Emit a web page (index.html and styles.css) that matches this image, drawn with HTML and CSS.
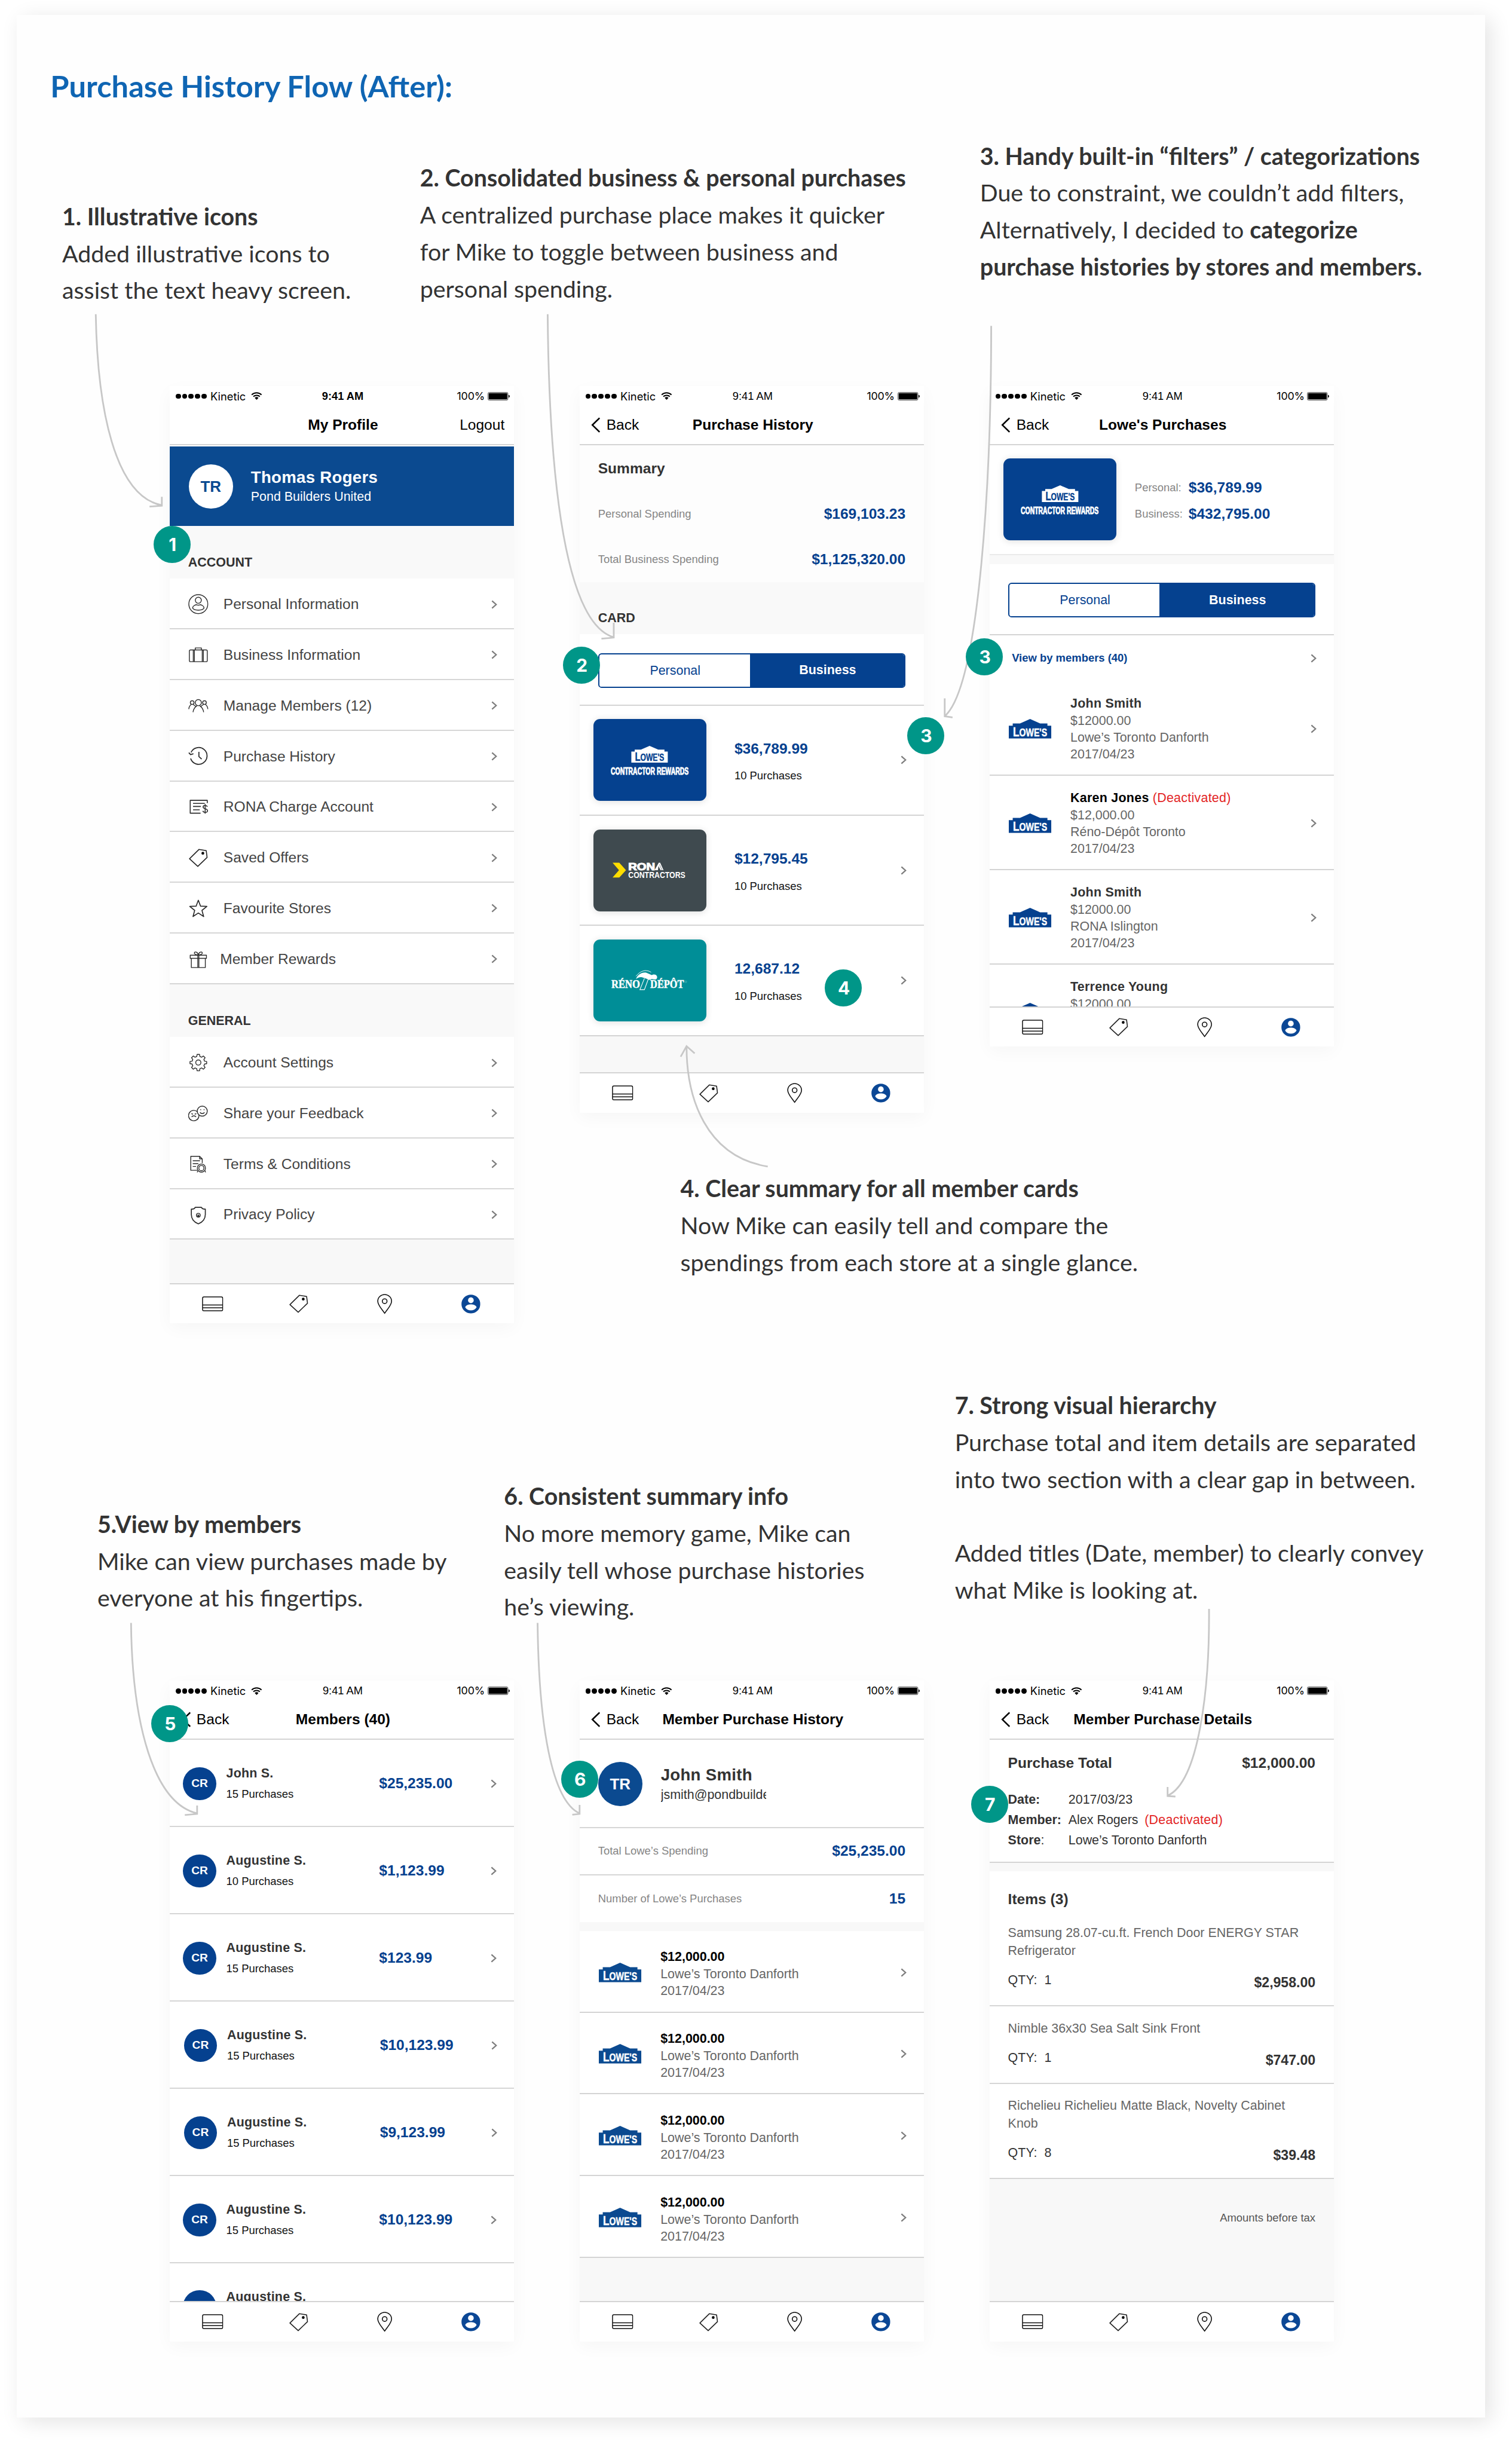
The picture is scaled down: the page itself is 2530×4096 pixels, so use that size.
FILE: index.html
```html
<!DOCTYPE html>
<html lang="en">
<head>
<meta charset="utf-8">
<title>Purchase History Flow (After)</title>
<link rel="stylesheet" href="styles.css">
</head>
<body>
<svg class="defs" width="0" height="0" aria-hidden="true">
  <symbol id="i-wifi" viewBox="0 0 20 14"><path d="M1.2 4.9a12.6 12.6 0 0 1 17.6 0M4.2 8.1a8.4 8.4 0 0 1 11.6 0" fill="none" stroke="#000" stroke-width="2.1"/><path d="M6.6 10.4a5 5 0 0 1 6.8 0L10 13.8z"/></symbol>
  <symbol id="i-battery" viewBox="0 0 40 15"><rect x=".6" y=".6" width="35.6" height="13.8" rx="2" fill="none" stroke="#444" stroke-width="1"/><rect x="1.8" y="1.8" width="33.2" height="11.4" rx="1"/><path d="M37.4 5c2.6.4 2.6 4.6 0 5z"/></symbol>
  <symbol id="i-back" viewBox="0 0 17 28"><path d="M15.2 1.4 2.4 14l12.8 12.6" fill="none" stroke="#000" stroke-width="2.8"/></symbol>
  <symbol id="i-next" viewBox="0 0 11 16"><path d="M1.4 1.4 8.8 8l-7.4 6.6" fill="none" stroke="#7d7d7d" stroke-width="2.4"/></symbol>
  <symbol id="i-card" viewBox="0 0 38 27"><g fill="none" stroke="#111" stroke-width="1.6"><rect x="1" y="1" width="36" height="25" rx="2.4"/><path d="M1 15.4h36M1 20.6h36"/></g></symbol>
  <symbol id="i-tag" viewBox="0 0 34 33"><path d="M1.2 18 18 1.4 31 3.4 32.6 15.6 16 31.6z" fill="none" stroke="#222" stroke-width="1.7" stroke-linejoin="round"/><circle cx="25" cy="8.2" r="2.5"/></symbol>
  <symbol id="i-pin" viewBox="0 0 27 36"><g fill="none" stroke="#111" stroke-width="1.7"><path d="M13.5 34.6C8 26.4 1.2 20 1.2 13a12.3 12 0 0 1 24.6 0c0 7-6.8 13.4-12.3 21.6z"/><circle cx="13.5" cy="13" r="4.2"/></g></symbol>
  <symbol id="i-user" viewBox="0 0 34 34"><circle cx="17" cy="17" r="16.8" fill="#0b4795"/><circle cx="17" cy="10.3" r="5.1" fill="#fff"/><path d="M6.8 22.600c1.4-3.600 6-5 10.200-5s8.800 1.400 10.200 5c-1.800 3.600-5.800 5.600-10.200 5.600s-8.400-2-10.200-5.600z" fill="#fff"/></symbol>
  <symbol id="i-lowes" viewBox="0 0 76 35"><path d="M38 0 56 7.900h13v4h7V35H0V11.900h7v-4h13z" fill="currentColor"/><text class="lowes-word" x="7.5" y="31" textLength="61" lengthAdjust="spacingAndGlyphs"><tspan font-size="24.5">L</tspan><tspan font-size="20">OWE'S</tspan></text></symbol>
  <symbol id="m-person" viewBox="0 0 36 36"><circle cx="18" cy="18" r="17"/><circle cx="18" cy="11" r="5.400"/><path d="M7.800 25c0-4 5-5.800 7-6 2 1 4.400 1 6.400 0 2 .2 7 2 7 6-3.200 5-17.200 5-20.400 0z"/></symbol>
  <symbol id="m-case" viewBox="0 0 36 36"><rect x="2" y="9" width="32" height="21" rx="2"/><path d="M9 9v21M11 9v21M25 9v21M27 9v21M12.500 9V5.500h11V9"/></symbol>
  <symbol id="m-group" viewBox="0 0 36 36"><circle cx="18" cy="12.500" r="5.500"/><circle cx="7" cy="12.300" r="3.300"/><circle cx="29" cy="12.300" r="3.300"/><path d="M8.500 29.500c.5-5 3.500-9 7-11.500M27.500 29.500c-.5-5-3.500-9-7-11.500M1 24c.2-4 1.800-6.500 4.500-8.500M35 24c-.2-4-1.800-6.500-4.500-8.500M8.500 15.500l4.800 3.500M27.500 15.500l-4.800 3.500"/></symbol>
  <symbol id="m-clock" viewBox="0 0 36 36"><path d="M4.300 21.500A15 15 0 1 0 5 10.500M1 11l3.200 3.600 5-1.600M19 9.500v8.500l5 4.500" stroke-width="1.900"/></symbol>
  <symbol id="m-charge" viewBox="0 0 36 36"><path d="M22 29.500H3.500V6.500H34v5M8.500 12h21M8.500 17.500h14M8.500 23.500h12" stroke-width="1.700"/><path d="M34 18c-.8-3-7.500-3-7.500.4 0 4 8 2.600 8 6.600 0 3.900-7.600 3.900-8.500.3M30.200 13v17.500" stroke-width="1.600"/></symbol>
  <symbol id="m-star" viewBox="0 0 36 36"><path d="m18 3.500 4 10.600 11.300.5-8.800 7 3 11L18 26.300l-9.500 6.300 3-11-8.800-7 11.300-.5z" stroke-width="1.800"/></symbol>
  <symbol id="m-gift" viewBox="0 0 36 36"><path d="M3.500 11h29v5.500h-29zM5.500 16.500h25V33h-25zM17 11v22M19 11v22M18 11c-3-1-8-1.500-7-4.500 1-2.500 6-1.500 7 4.500 1-6 6-7 7-4.500 1 3-4 3.500-7 4.500z"/></symbol>
  <symbol id="m-gear" viewBox="0 0 36 36"><circle cx="18" cy="18" r="4.600"/><path d="M15.200 7.200 15.800 3.500h4.400l.6 3.700 3.100 1.300 3.100-2.200 3.100 3.100-2.200 3.100 1.300 3.100 3.700.6v3.800l-3.700.6-1.300 3.100 2.200 3.100-3.100 3.100-3.100-2.200-3.100 1.300-.6 3.700h-4.400l-.6-3.700-3.100-1.300-3.100 2.200-3.100-3.100 2.200-3.100-1.300-3.100-3.700-.6v-3.800l3.700-.6 1.300-3.100-2.200-3.100 3.100-3.100 3.100 2.200z"/></symbol>
  <symbol id="m-faces" viewBox="0 0 36 36"><circle cx="25" cy="14" r="9"/><path d="M16.500 15.500A9.300 9.300 0 1 0 19 23.500c.1-.900 0-1.500-.3-2.500M21 16.300c2 2.800 6 2.800 8 0M21.500 11.500h1.500M27.500 11.500H29M6 24.500c2-2.800 6-2.800 8 0M5.500 18.500l3 1M14.500 18.500l-3 1"/></symbol>
  <symbol id="m-terms" viewBox="0 0 36 36"><path d="M16 29H4.500V4h15.800L25 8.500V16M20.300 4v4.500H25M8 12h13M8 17h10M8 22h6"/><circle cx="23.500" cy="25" r="7.300"/><circle cx="23.500" cy="25" r="4.600"/><path d="m17.500 29-1.500 3.500M29.500 29l1.500 3.500"/></symbol>
  <symbol id="m-shield" viewBox="0 0 36 36"><path d="M18 34C9.500 30.500 5.500 24 5.500 17V7.500c3 .4 5.500-.6 7-3h11c1.500 2.400 4 3.400 7 3V17c0 7-4 13.500-12.500 17z" stroke-width="1.800"/><circle cx="18" cy="18.500" r="3.400"/><path d="M17.200 18h1.600v2.600h-1.600z"/></symbol>
</svg>

<main class="sheet">
  <h1 class="title">Purchase History Flow (After):</h1>

  <div class="notes notes-top">
    <article class="note note-1"><h2>1. Illustrative icons</h2><p>Added illustrative icons to<br>assist the text heavy screen.</p></article>
    <article class="note note-2"><h2>2. Consolidated business &amp; personal purchases</h2><p>A centralized purchase place makes it quicker<br>for Mike to toggle between business and<br>personal spending.</p></article>
    <article class="note note-3"><h2>3. Handy built-in “filters” / categorizations</h2><p>Due to constraint, we couldn’t add filters,<br>Alternatively, I decided to <b>categorize<br>purchase histories by stores and members.</b></p></article>
  </div>

  <div class="phones phones-top">
    <section class="phone phone-profile">
      <header class="bar">
        <div class="status strong"><span class="carrier"><i class="dots"><i></i><i></i><i></i><i></i><i></i></i>Kinetic<svg class="wifi"><use href="#i-wifi"/></svg></span><span class="time">9:41 AM</span><span class="power">100%<svg class="battery"><use href="#i-battery"/></svg></span></div>
        <div class="nav"><span></span><h3>My Profile</h3><span class="logout">Logout</span></div>
      </header>
      <div class="profile"><span class="avatar">TR</span><div><strong>Thomas Rogers</strong><span>Pond Builders United</span></div></div>
      <h4 class="group">ACCOUNT</h4>
      <ul class="menu">
        <li><svg class="line-i"><use href="#m-person"/></svg><span>Personal Information</span><svg class="next"><use href="#i-next"/></svg></li>
        <li><svg class="line-i"><use href="#m-case"/></svg><span>Business Information</span><svg class="next"><use href="#i-next"/></svg></li>
        <li><svg class="line-i"><use href="#m-group"/></svg><span>Manage Members (12)</span><svg class="next"><use href="#i-next"/></svg></li>
        <li><svg class="line-i"><use href="#m-clock"/></svg><span>Purchase History</span><svg class="next"><use href="#i-next"/></svg></li>
        <li><svg class="line-i"><use href="#m-charge"/></svg><span>RONA Charge Account</span><svg class="next"><use href="#i-next"/></svg></li>
        <li><svg class="tag"><use href="#i-tag"/></svg><span>Saved Offers</span><svg class="next"><use href="#i-next"/></svg></li>
        <li><svg class="line-i"><use href="#m-star"/></svg><span>Favourite Stores</span><svg class="next"><use href="#i-next"/></svg></li>
        <li class="tight"><svg class="line-i"><use href="#m-gift"/></svg><span>Member Rewards</span><svg class="next"><use href="#i-next"/></svg></li>
      </ul>
      <h4 class="group">GENERAL</h4>
      <ul class="menu">
        <li><svg class="line-i"><use href="#m-gear"/></svg><span>Account Settings</span><svg class="next"><use href="#i-next"/></svg></li>
        <li><svg class="line-i"><use href="#m-faces"/></svg><span>Share your Feedback</span><svg class="next"><use href="#i-next"/></svg></li>
        <li><svg class="line-i"><use href="#m-terms"/></svg><span>Terms &amp; Conditions</span><svg class="next"><use href="#i-next"/></svg></li>
        <li><svg class="line-i"><use href="#m-shield"/></svg><span>Privacy Policy</span><svg class="next"><use href="#i-next"/></svg></li>
      </ul>
      <div class="filler"></div>
      <footer class="tabs"><span><svg class="card-i"><use href="#i-card"/></svg></span><span><svg class="tag"><use href="#i-tag"/></svg></span><span><svg class="pin-i"><use href="#i-pin"/></svg></span><span><svg class="user-i"><use href="#i-user"/></svg></span></footer>
    </section>

    <section class="phone phone-history">
      <header class="bar">
        <div class="status"><span class="carrier"><i class="dots"><i></i><i></i><i></i><i></i><i></i></i>Kinetic<svg class="wifi"><use href="#i-wifi"/></svg></span><span class="time">9:41 AM</span><span class="power">100%<svg class="battery"><use href="#i-battery"/></svg></span></div>
        <div class="nav"><span class="back"><svg><use href="#i-back"/></svg>Back</span><h3>Purchase History</h3><span></span></div>
      </header>
      <div class="summary">
        <h4>Summary</h4>
        <div class="pair"><span>Personal Spending</span><b>$169,103.23</b></div>
        <div class="pair"><span>Total Business Spending</span><b>$1,125,320.00</b></div>
      </div>
      <h4 class="group group-card">CARD</h4>
      <div class="switch"><div class="segments"><span>Personal</span><b>Business</b></div></div>
      <div class="card-row"><div class="card lowes"><svg class="house"><use href="#i-lowes"/></svg><svg class="slogan" viewBox="0 0 140 14"><text x="0" y="12.800" textLength="139" lengthAdjust="spacingAndGlyphs">CONTRACTOR REWARDS</text></svg></div><div class="sum"><b>$36,789.99</b><span>10 Purchases</span></div><svg class="next"><use href="#i-next"/></svg></div>
      <div class="card-row"><div class="card rona"><svg viewBox="0 0 132 30"><path d="M0 1.500h12L24 15 12 28H0l11.500-13z" fill="#fd0"/><text class="rona-name" x="28" y="15" textLength="48" lengthAdjust="spacingAndGlyphs">RON</text><path d="M75 15 82.500 1.500H85L91 15h-2.200L84 4.500h-.600L88 15h-2.200L82 7.500 81 15z" fill="#fff"/><text class="rona-sub" x="28" y="28.500" textLength="102" lengthAdjust="spacingAndGlyphs">CONTRACTORS</text></svg></div><div class="sum"><b>$12,795.45</b><span>10 Purchases</span></div><svg class="next"><use href="#i-next"/></svg></div>
      <div class="card-row"><div class="card reno"><svg viewBox="0 0 136 36"><text x="0" y="31" textLength="51" lengthAdjust="spacingAndGlyphs">RÉNO</text><text x="69.500" y="31" textLength="60" lengthAdjust="spacingAndGlyphs">DÉPÔT</text><path d="M44 15c3-8 11-13 19-11l9 4c2-1 5-2 8 0 3 3 2 8-2 8l-6-1c-2 2-6 2-8 0l-9-3c-4-1-7 0-11 3z" fill="#fff"/><path d="M44 10c4-5 9-9 16-10 5 0 8 1 11 3" fill="none" stroke="#fff"/><path d="M59 14 51 34h8l7-19" fill="none" stroke="#fff" stroke-width="1.200"/><circle cx="133" cy="20" r="1.600" fill="none" stroke="#7cc" stroke-width=".6"/></svg></div><div class="sum"><b>12,687.12</b><span>10 Purchases</span></div><svg class="next"><use href="#i-next"/></svg></div>
      <div class="filler"></div>
      <footer class="tabs"><span><svg class="card-i"><use href="#i-card"/></svg></span><span><svg class="tag"><use href="#i-tag"/></svg></span><span><svg class="pin-i"><use href="#i-pin"/></svg></span><span><svg class="user-i"><use href="#i-user"/></svg></span></footer>
    </section>

    <section class="phone phone-store">
      <header class="bar">
        <div class="status"><span class="carrier"><i class="dots"><i></i><i></i><i></i><i></i><i></i></i>Kinetic<svg class="wifi"><use href="#i-wifi"/></svg></span><span class="time">9:41 AM</span><span class="power">100%<svg class="battery"><use href="#i-battery"/></svg></span></div>
        <div class="nav"><span class="back"><svg><use href="#i-back"/></svg>Back</span><h3>Lowe's Purchases</h3><span></span></div>
      </header>
      <div class="store"><div class="card lowes"><svg class="house"><use href="#i-lowes"/></svg><svg class="slogan" viewBox="0 0 140 14"><text x="0" y="12.800" textLength="139" lengthAdjust="spacingAndGlyphs">CONTRACTOR REWARDS</text></svg></div><dl><dt>Personal:</dt><dd>$36,789.99</dd><dt>Business:</dt><dd>$432,795.00</dd></dl></div>
      <div class="gap"></div>
      <div class="switch"><div class="segments"><span>Personal</span><b>Business</b></div></div>
      <div class="scroll">
        <div class="view"><b>View by members (40)</b><svg class="next"><use href="#i-next"/></svg></div>
        <div class="buy"><svg class="lowes-i"><use href="#i-lowes"/></svg><div><b>John Smith</b><span>$12000.00</span><span>Lowe’s Toronto Danforth</span><span>2017/04/23</span></div><svg class="next"><use href="#i-next"/></svg></div>
        <div class="buy"><svg class="lowes-i"><use href="#i-lowes"/></svg><div><b class="ink">Karen Jones <em>(Deactivated)</em></b><span>$12,000.00</span><span>Réno-Dépôt Toronto</span><span>2017/04/23</span></div><svg class="next"><use href="#i-next"/></svg></div>
        <div class="buy"><svg class="lowes-i"><use href="#i-lowes"/></svg><div><b>John Smith</b><span>$12000.00</span><span>RONA Islington</span><span>2017/04/23</span></div><svg class="next"><use href="#i-next"/></svg></div>
        <div class="buy"><svg class="lowes-i"><use href="#i-lowes"/></svg><div><b>Terrence Young</b><span>$12000.00</span><span>&nbsp;</span><span>&nbsp;</span></div></div>
      </div>
      <footer class="tabs"><span><svg class="card-i"><use href="#i-card"/></svg></span><span><svg class="tag"><use href="#i-tag"/></svg></span><span><svg class="pin-i"><use href="#i-pin"/></svg></span><span><svg class="user-i"><use href="#i-user"/></svg></span></footer>
    </section>

    <article class="note note-4"><h2>4. Clear summary for all member cards</h2><p>Now Mike can easily tell and compare the<br>spendings from each store at a single glance.</p></article>
  </div>

  <div class="notes notes-bottom">
    <article class="note note-5"><h2>5.View by members</h2><p>Mike can view purchases made by<br>everyone at his fingertips.</p></article>
    <article class="note note-6"><h2>6. Consistent summary info</h2><p>No more memory game, Mike can<br>easily tell whose purchase histories<br>he’s viewing.</p></article>
    <article class="note note-7"><h2>7. Strong visual hierarchy</h2><p>Purchase total and item details are separated<br>into two section with a clear gap in between.<br><br>Added titles (Date, member) to clearly convey<br>what Mike is looking at.</p></article>
  </div>

  <div class="phones">
    <section class="phone">
      <header class="bar">
        <div class="status"><span class="carrier"><i class="dots"><i></i><i></i><i></i><i></i><i></i></i>Kinetic<svg class="wifi"><use href="#i-wifi"/></svg></span><span class="time">9:41 AM</span><span class="power">100%<svg class="battery"><use href="#i-battery"/></svg></span></div>
        <div class="nav"><span class="back"><svg><use href="#i-back"/></svg>Back</span><h3>Members (40)</h3><span></span></div>
      </header>
      <div class="scroll">
        <div class="member"><span class="initials">CR</span><div><b>John S.</b><span>15 Purchases</span></div><strong>$25,235.00</strong><svg class="next"><use href="#i-next"/></svg></div>
        <div class="member"><span class="initials">CR</span><div><b>Augustine S.</b><span>10 Purchases</span></div><strong>$1,123.99</strong><svg class="next"><use href="#i-next"/></svg></div>
        <div class="member"><span class="initials">CR</span><div><b>Augustine S.</b><span>15 Purchases</span></div><strong>$123.99</strong><svg class="next"><use href="#i-next"/></svg></div>
        <div class="member nudged"><span class="initials">CR</span><div><b>Augustine S.</b><span>15 Purchases</span></div><strong>$10,123.99</strong><svg class="next"><use href="#i-next"/></svg></div>
        <div class="member nudged"><span class="initials">CR</span><div><b>Augustine S.</b><span>15 Purchases</span></div><strong>$9,123.99</strong><svg class="next"><use href="#i-next"/></svg></div>
        <div class="member"><span class="initials">CR</span><div><b>Augustine S.</b><span>15 Purchases</span></div><strong>$10,123.99</strong><svg class="next"><use href="#i-next"/></svg></div>
        <div class="member"><span class="initials">&nbsp;</span><div><b>Augustine S.</b><span>&nbsp;</span></div></div>
      </div>
      <footer class="tabs"><span><svg class="card-i"><use href="#i-card"/></svg></span><span><svg class="tag"><use href="#i-tag"/></svg></span><span><svg class="pin-i"><use href="#i-pin"/></svg></span><span><svg class="user-i"><use href="#i-user"/></svg></span></footer>
    </section>

    <section class="phone phone-member">
      <header class="bar">
        <div class="status"><span class="carrier"><i class="dots"><i></i><i></i><i></i><i></i><i></i></i>Kinetic<svg class="wifi"><use href="#i-wifi"/></svg></span><span class="time">9:41 AM</span><span class="power">100%<svg class="battery"><use href="#i-battery"/></svg></span></div>
        <div class="nav"><span class="back"><svg><use href="#i-back"/></svg>Back</span><h3>Member Purchase History</h3><span></span></div>
      </header>
      <div class="who"><span class="avatar">TR</span><div><strong>John Smith</strong><span>jsmith@pondbuilders</span></div></div>
      <div class="pair lined"><span>Total Lowe’s Spending</span><b>$25,235.00</b></div>
      <div class="pair"><span>Number of Lowe’s Purchases</span><b>15</b></div>
      <div class="gap"></div>
      <div class="buy"><svg class="lowes-i"><use href="#i-lowes"/></svg><div><b>$12,000.00</b><span>Lowe’s Toronto Danforth</span><span>2017/04/23</span></div><svg class="next"><use href="#i-next"/></svg></div>
      <div class="buy"><svg class="lowes-i"><use href="#i-lowes"/></svg><div><b>$12,000.00</b><span>Lowe’s Toronto Danforth</span><span>2017/04/23</span></div><svg class="next"><use href="#i-next"/></svg></div>
      <div class="buy"><svg class="lowes-i"><use href="#i-lowes"/></svg><div><b>$12,000.00</b><span>Lowe’s Toronto Danforth</span><span>2017/04/23</span></div><svg class="next"><use href="#i-next"/></svg></div>
      <div class="buy"><svg class="lowes-i"><use href="#i-lowes"/></svg><div><b>$12,000.00</b><span>Lowe’s Toronto Danforth</span><span>2017/04/23</span></div><svg class="next"><use href="#i-next"/></svg></div>
      <div class="filler"></div>
      <footer class="tabs"><span><svg class="card-i"><use href="#i-card"/></svg></span><span><svg class="tag"><use href="#i-tag"/></svg></span><span><svg class="pin-i"><use href="#i-pin"/></svg></span><span><svg class="user-i"><use href="#i-user"/></svg></span></footer>
    </section>

    <section class="phone phone-details">
      <header class="bar">
        <div class="status"><span class="carrier"><i class="dots"><i></i><i></i><i></i><i></i><i></i></i>Kinetic<svg class="wifi"><use href="#i-wifi"/></svg></span><span class="time">9:41 AM</span><span class="power">100%<svg class="battery"><use href="#i-battery"/></svg></span></div>
        <div class="nav"><span class="back"><svg><use href="#i-back"/></svg>Back</span><h3>Member Purchase Details</h3><span></span></div>
      </header>
      <div class="total">
        <h4><span>Purchase Total</span><span>$12,000.00</span></h4>
        <dl><dt>Date:</dt><dd>2017/03/23</dd><dt>Member:</dt><dd>Alex Rogers <em>(Deactivated)</em></dd><dt>Store<i>:</i></dt><dd>Lowe’s Toronto Danforth</dd></dl>
      </div>
      <div class="gap"></div>
      <h4 class="items">Items (3)</h4>
      <div class="item"><p>Samsung 28.07-cu.ft. French Door ENERGY STAR<br>Refrigerator</p><div><span>QTY:</span><span>1</span><b>$2,958.00</b></div></div>
      <div class="item"><p>Nimble 36x30 Sea Salt Sink Front</p><div><span>QTY:</span><span>1</span><b>$747.00</b></div></div>
      <div class="item"><p>Richelieu Richelieu Matte Black, Novelty Cabinet<br>Knob</p><div><span>QTY:</span><span>8</span><b>$39.48</b></div></div>
      <div class="filler tax">Amounts before tax</div>
      <footer class="tabs"><span><svg class="card-i"><use href="#i-card"/></svg></span><span><svg class="tag"><use href="#i-tag"/></svg></span><span><svg class="pin-i"><use href="#i-pin"/></svg></span><span><svg class="user-i"><use href="#i-user"/></svg></span></footer>
    </section>
  </div>
</main>

<svg class="arrows" viewBox="0 0 2700 4371" aria-hidden="true">
  <path d="M171 561C174 730 205 885 288 902M289 887v16l-22 1.500"/>
  <path d="M978 561C980 800 1000 1110 1096 1138M1096 1112v26.500l-22 2"/>
  <path d="M1770 582C1770 850 1750 1220 1688 1278M1687 1247v32l14 2"/>
  <path d="M1371 2083C1260 2065 1226 1960 1226 1869M1215.500 1887 1226 1868l14.500 13"/>
  <path d="M234 2898C236 3080 275 3220 352 3238M352 3224v15l-22 2"/>
  <path d="M960 2898C962 3080 985 3215 1035 3238M1035 3223v16l-13 1.500"/>
  <path d="M2159 2873C2160 3020 2140 3180 2086 3206M2085 3191v16l14 1"/>
</svg>
<span class="badge b1">1</span>
<span class="badge b2">2</span>
<span class="badge b3">3</span>
<span class="badge b4">4</span>
<span class="badge b3b">3</span>
<span class="badge b5">5</span>
<span class="badge b6">6</span>
<span class="badge b7">7</span>
</body>
</html>
```
FILE: styles.css
```css
/* 1rem is ten design pixels; the 2700px-wide board fills a 2530px window. */
html { font-size: 9.37037px; }
* { box-sizing: border-box; margin: 0; padding: 0; }
body { position: relative; width: 270rem; height: 437.1rem; overflow: hidden; background: #fff; font-family: "Liberation Sans", Arial, sans-serif; color: #333; }
ul { list-style: none; }
i, em { font-style: normal; }
svg { display: block; flex: none; overflow: visible; }
.defs { position: absolute; }

.sheet { display: flow-root; width: 262.2rem; height: 429rem; margin: 2.7rem 0 0 3rem; background: #fefefe; box-shadow: 1rem .8rem 3.6rem rgba(0,0,0,.11); }
.title { height: 21.8rem; padding: 9.4rem 0 0 6rem; font: 700 5.4rem/6.6rem Lato, sans-serif; color: #0f65b3; white-space: nowrap; }

.notes { display: grid; }
.notes-top { height: 44.4rem; grid-template-columns: 63.9rem 100rem 1fr; padding-left: 8.1rem; }
.notes-bottom { height: 52.5rem; margin-top: 11.3rem; grid-template-columns: 72.6rem 80.5rem 1fr; padding-left: 14.4rem; }
.note { font: 400 4.2rem/6.6rem Lato, sans-serif; color: #333; white-space: nowrap; }
.note h2 { font-size: inherit; font-weight: 700; }
.note-1 { padding-top: 10.8rem; }
.note-2 { padding-top: 3.9rem; }
.note-4 { grid-column: 2 / 4; padding: 10.2rem 0 0 18rem; }
.note-5 { padding-top: 21.2rem; }
.note-6 { padding-top: 16.2rem; }

.phones { display: grid; grid-template-columns: repeat(3, 61.5rem); column-gap: 11.7rem; align-items: start; padding-left: 27.3rem; }
.phones-top { grid-template-rows: 129.8rem 37.6rem; }
.phone { display: flex; flex-direction: column; height: 118rem; background: #fff; box-shadow: 0 1rem 3rem rgba(0,0,0,.035); }
.phone-profile { grid-row: 1 / 3; height: 167.4rem; }
.phone-history { height: 129.8rem; }

.bar { height: 10.6rem; flex: none; border-bottom: .25rem solid #d4d4d4; color: #000; }
.status { display: grid; grid-template-columns: 1fr auto 1fr; align-items: center; height: 3.7rem; padding: 0 .75rem 0 1.05rem; font-size: 1.95rem; line-height: 2.4rem; }
.carrier, .power { display: flex; align-items: center; font: 400 1.95rem/2.4rem Inter, sans-serif; }
.power { justify-content: flex-end; font-size: 1.9rem; letter-spacing: -.01em; }
.strong .time { font-weight: 700; }
.dots { display: flex; gap: .22rem; margin-right: .65rem; }
.dots i { width: .94rem; height: .94rem; border-radius: 50%; background: #000; }
.wifi { width: 2rem; height: 1.4rem; margin-left: .95rem; }
.battery { width: 4rem; height: 1.5rem; margin-left: .5rem; }
.nav { display: grid; grid-template-columns: 1fr auto 1fr; align-items: center; height: 6.5rem; padding: 0 1.7rem 0 2.1rem; font-size: 2.62rem; line-height: 3rem; }
.nav h3 { font-size: inherit; white-space: nowrap; }
.back { display: flex; align-items: center; gap: 1rem; }
.back svg { width: 1.7rem; height: 2.8rem; }
.logout { text-align: right; }

.tabs { display: grid; grid-template-columns: repeat(4, 1fr); flex: none; height: 7.2rem; border-top: .25rem solid #d4d4d4; background: #fff; }
.tabs span { display: grid; place-items: center; }
.card-i { width: 3.8rem; height: 2.7rem; }
.tag { width: 3.4rem; height: 3.3rem; }
.pin-i { width: 2.7rem; height: 3.6rem; }
.user-i { width: 3.4rem; height: 3.4rem; }
.filler { flex: 1; background: #f8f8f8; }
.gap { height: 1.6rem; flex: none; background: #f8f8f8; }
.scroll { flex: 1; min-height: 0; overflow: hidden; }
.next { width: 1.1rem; height: 1.6rem; margin-left: auto; }

.profile { display: flex; align-items: center; gap: 3.2rem; height: 14.2rem; flex: none; margin-top: .2rem; padding: .2rem 0 0 3.4rem; background: #0b4a90; color: #fff; }
.avatar { display: grid; place-items: center; width: 7.9rem; height: 7.9rem; border-radius: 50%; background: #fff; color: #0b4a90; font-size: 2.78rem; font-weight: 700; }
.profile strong, .who strong { display: block; font-size: 2.95rem; line-height: 3.6rem; letter-spacing: .01em; }
.profile div span, .who div span { display: block; font-size: 2.29rem; line-height: 3.3rem; }

.group { display: flex; align-items: flex-end; height: 9.45rem; flex: none; padding: 0 0 1.65rem 3.3rem; background: #f9f9f9; font-size: 2.29rem; line-height: 2.4rem; }
.group-card { height: 9.2rem; }
.menu li { display: flex; align-items: center; height: 9.05rem; padding: .3rem 3rem 0 3.3rem; border-bottom: .22rem solid #d6d6d6; font-size: 2.62rem; color: #444; }
.line-i { width: 3.6rem; height: 3.6rem; margin-right: 2.7rem; fill: none; stroke: #2b2b2b; stroke-width: 1.5; stroke-linejoin: round; }
.menu .tag { margin: 0 2.8rem 0 .1rem; }
.menu .tight .line-i { margin-right: 2.1rem; }

.summary { flex: none; background: #fdfdfd; }
.summary h4 { height: 8.2rem; padding-left: 3.3rem; font-size: 2.62rem; line-height: 8.4rem; }
.pair { display: flex; align-items: center; justify-content: space-between; height: 8.15rem; padding: 0 3.3rem; font-size: 1.97rem; color: #858585; }
.pair b { font-size: 2.62rem; color: #05418f; }
.switch { flex: none; height: 12.8rem; padding: 3.4rem 3.3rem 0; border-bottom: .25rem solid #d4d4d4; }
.segments { display: grid; grid-template-columns: 27.1rem 1fr; height: 6.2rem; border: .22rem solid #05418f; border-radius: .6rem; overflow: hidden; font-size: 2.29rem; line-height: 5.9rem; text-align: center; color: #05418f; }
.segments b { margin: -.22rem; background: #05418f; color: #fff; line-height: 6.4rem; }

.card { display: flex; flex-direction: column; align-items: center; width: 20.15rem; height: 14.6rem; flex: none; border-radius: 1.2rem; box-shadow: 0 .2rem 1.2rem rgba(0,0,0,.12); }
.lowes { background: #05418f; color: #fff; --word: #05418f; padding-top: 4.8rem; gap: .8rem; }
.house { width: 6.6rem; height: 3rem; }
.slogan { width: 14rem; height: 1.4rem; }
.slogan text { font: 700 17px "Liberation Sans", sans-serif; fill: #fff; stroke: #fff; stroke-width: .9; }
.lowes-word { font-family: "Liberation Sans", sans-serif; font-weight: 700; fill: var(--word); stroke: var(--word); stroke-width: .5; }
.rona { justify-content: center; background: #3f4a4f; }
.rona svg { width: 13.2rem; height: 3rem; }
.rona-name { font: 700 18.5px "Liberation Sans", sans-serif; fill: #fff; stroke: #fff; stroke-width: 1.2; }
.rona-sub { font: 700 15.5px "Liberation Sans", sans-serif; fill: #fff; }
.reno { justify-content: center; background: #008e97; }
.reno svg { width: 13.6rem; height: 3.6rem; }
.reno text { font: 700 19px "Liberation Serif", serif; fill: #fff; stroke: #fff; stroke-width: .5; }
.card-row { display: flex; align-items: center; flex: none; height: 19.68rem; padding: 0 3.1rem 0 2.45rem; border-bottom: .25rem solid #d4d4d4; }
.sum { display: grid; margin: .4rem 0 0 5.05rem; font-size: 1.97rem; line-height: 4rem; color: #111; }
.sum b { font-size: 2.62rem; line-height: 4.8rem; color: #05418f; }
.sum span { padding-top: .4rem; }

.store { display: flex; align-items: center; gap: 3.3rem; flex: none; height: 19.6rem; padding-left: 2.5rem; border-bottom: .22rem solid #eaeaea; }
.store dl { display: grid; grid-template-columns: 9.6rem auto; line-height: 4.65rem; padding-top: .5rem; }
.store dt { font-size: 1.97rem; color: #858585; }
.store dd { font-size: 2.62rem; font-weight: 700; color: #05418f; }
.view { display: flex; align-items: center; height: 8.1rem; padding: 0 3.1rem 0 4rem; font-size: 1.97rem; color: #05418f; }
.buy { display: flex; align-items: center; flex: none; height: 16.89rem; padding: .4rem 3.1rem 0 3.4rem; border-bottom: .25rem solid #d4d4d4; font-size: 2.29rem; line-height: 3rem; color: #666; }
.buy div { display: grid; margin-left: 3.45rem; }
.buy b { color: #333; padding-bottom: .1rem; letter-spacing: .012em; }
.buy .ink, .phone-member .buy b { color: #000; }
em { font-weight: 400; color: #e32525; letter-spacing: .012em; }
.lowes-i { width: 7.6rem; height: 3.5rem; color: #05418f; --word: #fff; }

.member { display: grid; grid-template-columns: 5.9rem 29.1rem 1fr auto; align-items: center; height: 15.58rem; padding: .2rem 3.1rem 0 2.4rem; border-bottom: .22rem solid #d6d6d6; }
.nudged { padding-left: 2.55rem; padding-right: 2.95rem; }
.initials { display: grid; place-items: center; width: 5.9rem; height: 5.9rem; border-radius: 50%; background: #05418f; color: #fff; font-size: 2.05rem; font-weight: 700; }
.member div { display: grid; padding-left: 1.8rem; font-size: 1.97rem; line-height: 3.6rem; color: #111; }
.member b { font-size: 2.29rem; line-height: 3.7rem; color: #333; letter-spacing: .01em; }
.member strong { font-size: 2.62rem; color: #05418f; }

.who { display: flex; align-items: center; gap: 3.3rem; height: 15.8rem; flex: none; padding: .2rem 0 0 3.3rem; border-bottom: .22rem solid #d6d6d6; }
.who .avatar { background: #0b4a90; color: #fff; }
.who strong { line-height: 4rem; }
.who div span { width: 18.8rem; overflow: hidden; line-height: 3.4rem; }
.phone-member .pair { height: 8.35rem; flex: none; }
.lined { border-bottom: .22rem solid #d6d6d6; }
.phone-member .buy { height: 14.6rem; border-width: .22rem; }
.phone-member .buy div { margin-top: .6rem; }
.phone-member .buy b { letter-spacing: 0; }
.phone-member .lowes-i { color: #0b4a90; }

.total { flex: none; height: 21.9rem; padding: 0 3.3rem; border-bottom: .22rem solid #d4d4d4; }
.total h4 { display: flex; justify-content: space-between; height: 8.2rem; font-size: 2.62rem; line-height: 8.3rem; }
.total dl { display: grid; grid-template-columns: 10.8rem auto; font-size: 2.29rem; line-height: 3.61rem; padding-top: .75rem; }
.total dt { font-weight: 700; }
.total dt i { font-weight: 400; }
.total em { padding-left: .5rem; }
.items { flex: none; height: 7.9rem; padding-left: 3.3rem; font-size: 2.62rem; line-height: 10rem; }
.item { flex: none; padding: 2.4rem 3.3rem 2rem; border-bottom: .22rem solid #d6d6d6; font-size: 2.29rem; line-height: 3.2rem; }
.items + .item { padding-top: 1.6rem; }
.item p { color: #666; }
.item div { display: grid; grid-template-columns: 6.5rem 1fr auto; padding-top: 2rem; }
.item b { font-size: 2.46rem; line-height: 4rem; }
.tax { padding: 5.7rem 3.3rem 0; font-size: 1.97rem; line-height: 2.4rem; text-align: right; color: #555; }

.arrows { position: absolute; inset: 0; width: 270rem; height: 437.1rem; pointer-events: none; }
.arrows path { fill: none; stroke: #c7c7c7; stroke-width: 3; }
.badge { position: absolute; display: grid; place-items: center; width: 6.6rem; height: 6.6rem; border-radius: 50%; background: #009688; color: #fff; font: 700 3.2rem/1 Inter, sans-serif; padding-left: .2rem; }
.b1 { left: 27.4rem; top: 93.9rem; }
.b2 { left: 100.5rem; top: 115.5rem; }
.b3 { left: 162rem; top: 128.1rem; }
.b4 { left: 147.3rem; top: 173.1rem; }
.b3b { left: 172.5rem; top: 114rem; }
.b5 { left: 27rem; top: 304.5rem; }
.b6 { left: 100.2rem; top: 314.4rem; }
.b7 { left: 173.4rem; top: 318.9rem; }
```
